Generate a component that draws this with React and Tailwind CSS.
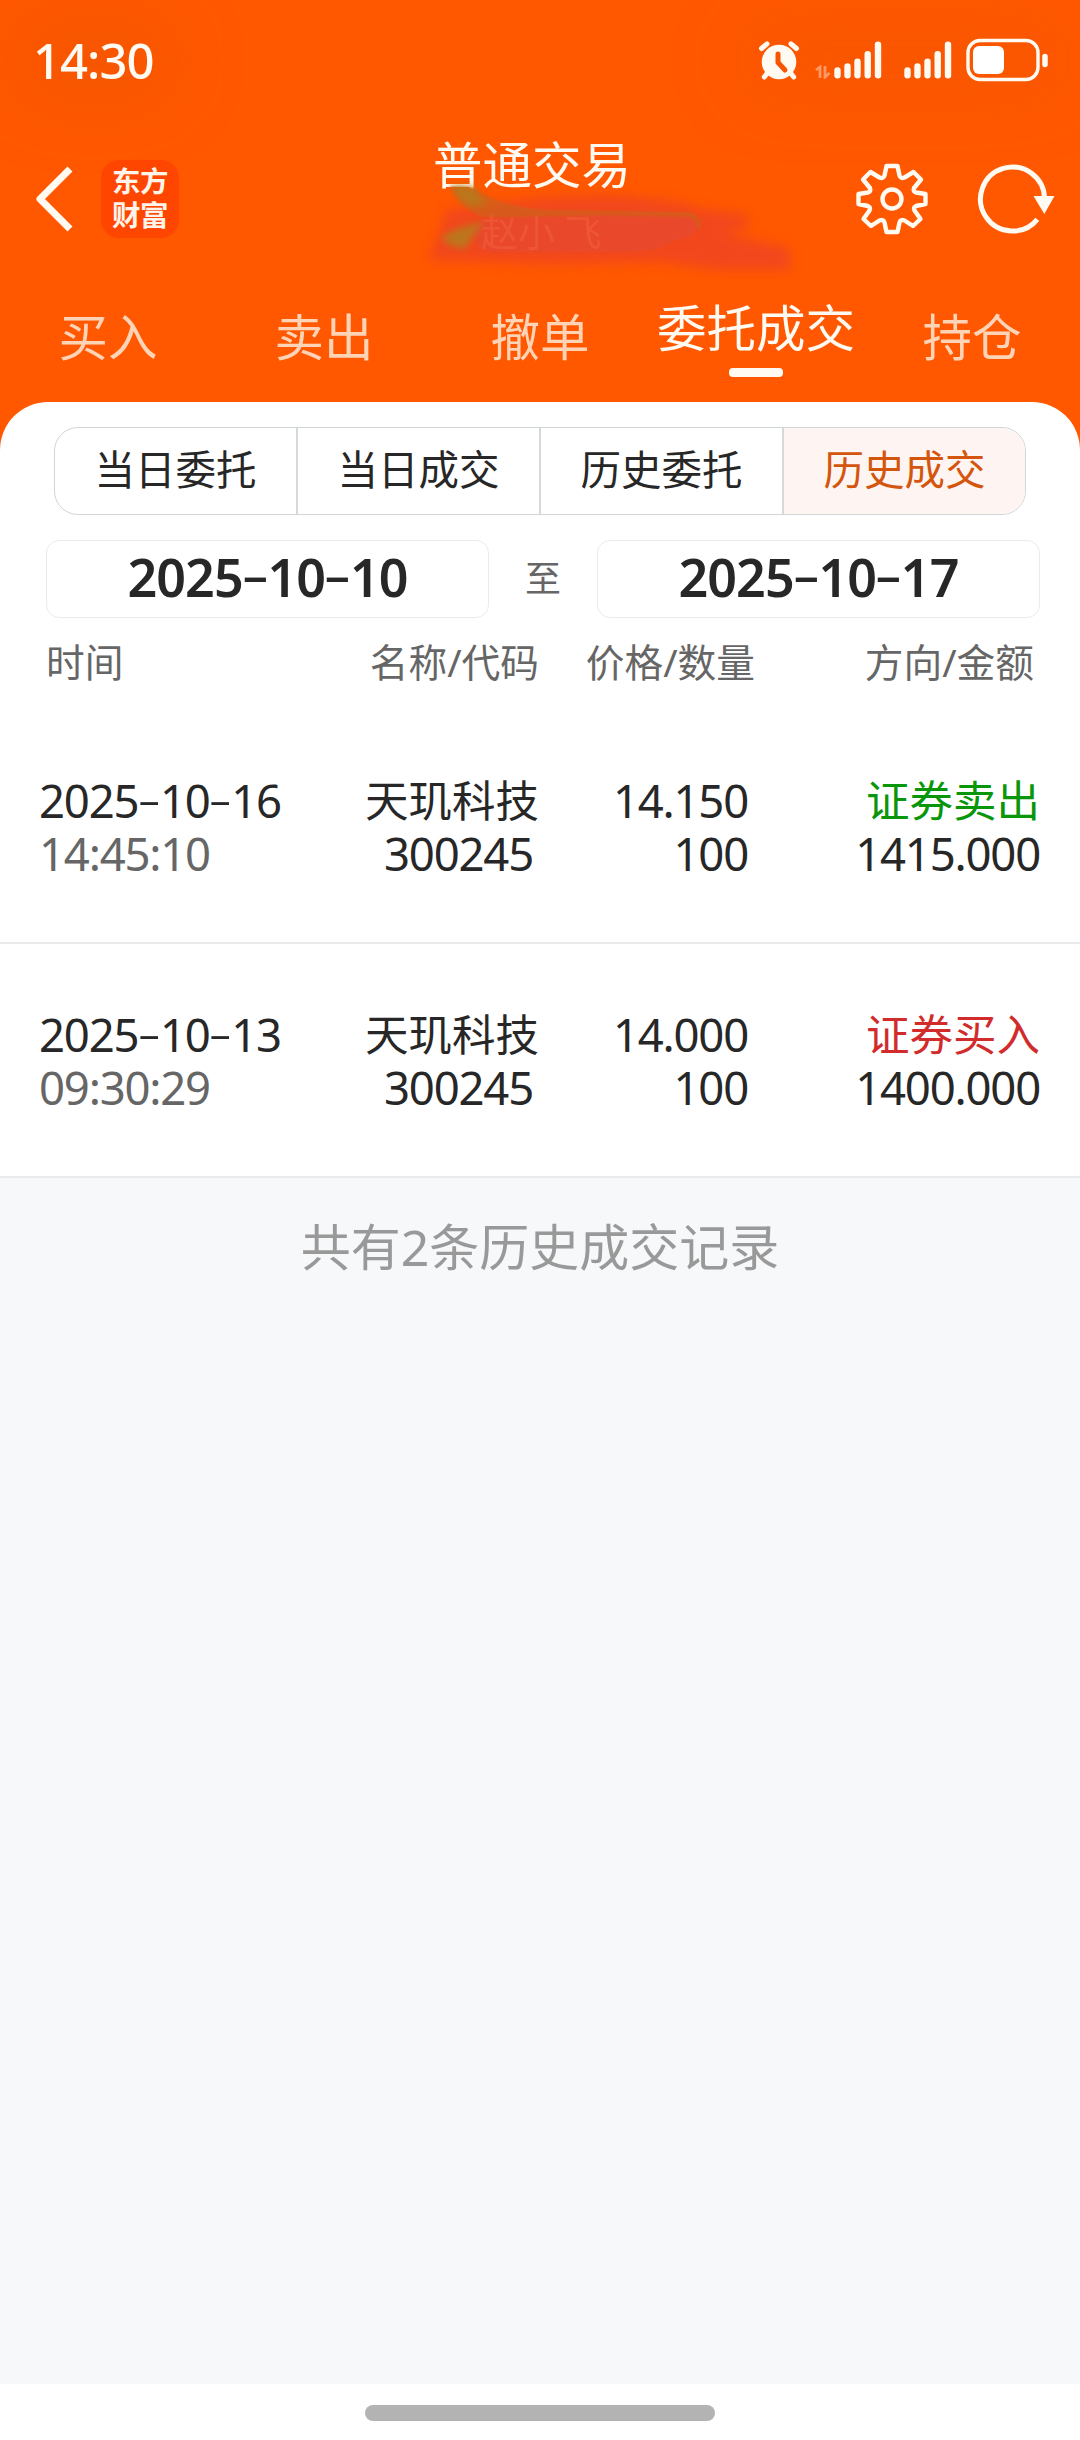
import React from 'react';

const mainTabs = [
  { label: '买入' },
  { label: '卖出' },
  { label: '撤单' },
  { label: '委托成交', active: true },
  { label: '持仓' },
];

const subTabs = ['当日委托', '当日成交', '历史委托', '历史成交'];

const trades = [
  { date: '2025-10-16', time: '14:45:10', name: '天玑科技', code: '300245', price: '14.150', count: '100', side: '证券卖出', amount: '1415.000', color: 'text-[#0a960a]' },
  { date: '2025-10-13', time: '09:30:29', name: '天玑科技', code: '300245', price: '14.000', count: '100', side: '证券买入', amount: '1400.000', color: 'text-[#d12b2b]' },
];

// dates use a wide hyphen between the digit groups
function DateText({ value }) {
  return (
    <span className="whitespace-nowrap">
      {value.split('-').map((part, i) => (
        <React.Fragment key={i}>
          {i > 0 && (
            <span className="inline-block w-[0.475em] text-center tracking-normal">
              <span className="inline-block scale-x-[1.6] scale-y-[0.8] -translate-y-[0.03em]">-</span>
            </span>
          )}
          {part}
        </React.Fragment>
      ))}
    </span>
  );
}

function Signal() {
  return (
    <svg className="w-[48px] h-[38px]" viewBox="0 0 48 38" stroke="#fffaf2" strokeWidth="6.4" strokeLinecap="round">
      <path d="M3.5 29.5V34.3M13.5 25.5V34.3M23.5 20.7V34.3M33.7 13.2V34.3M44 3.7V34.3" />
    </svg>
  );
}

function StatusBar() {
  return (
    <div className="h-[120px] flex items-center justify-between pl-[33px] pr-[32px]">
      <span className="relative text-[49px] leading-[60px] font-medium tracking-[-1px]">
        <span className="absolute -inset-x-4 inset-y-0 rounded-full bg-[#c84600]/25 blur-2xl"></span>
        <span className="relative">14:30</span>
      </span>
      <div className="relative flex items-center h-[44px]">
        <span className="absolute -inset-x-4 inset-y-0 rounded-full bg-[#c84600]/20 blur-2xl"></span>
        <svg className="relative w-[42px] h-[40px]" viewBox="0 0 42 40" fill="none" strokeLinecap="round">
          <circle cx="21" cy="22" r="17.3" fill="#fffaf2" />
          <path d="M3.5 8.5L9 3.8M38.5 8.5L33 3.8M9 33.5L6.3 37M33 33.5L35.7 37" stroke="#fffaf2" strokeWidth="5" />
          <path d="M20 14V22.5L27 30" stroke="#f85500" strokeWidth="5" strokeLinejoin="round" />
        </svg>
        <svg className="relative w-[16px] h-[14px] ml-[15px] mt-[24px]" viewBox="0 0 16 14" fill="none" stroke="#ff9864" strokeWidth="2.8">
          <path d="M1 5L5 2V13M10 1V12L14.5 8" />
        </svg>
        <div className="relative ml-[3px]"><Signal /></div>
        <div className="relative ml-[22px]"><Signal /></div>
        <svg className="relative w-[82px] h-[44px] ml-[14px]" viewBox="0 0 82 44" fill="none">
          <rect x="2" y="2.5" width="70" height="39" rx="12" stroke="#fffaf2" strokeWidth="3.4" />
          <rect x="7" y="8" width="31" height="28" rx="6" fill="#fff" />
          <path d="M79 18.5V26.5" stroke="#fffaf2" strokeWidth="5.5" strokeLinecap="round" />
        </svg>
      </div>
    </div>
  );
}

function Smudge() {
  return (
    <svg className="absolute left-[400px] top-[180px] w-[420px] h-[100px]" viewBox="0 0 420 100" fill="none">
      <defs>
        <filter id="soft" x="-20%" y="-50%" width="140%" height="200%"><feGaussianBlur stdDeviation="6" /></filter>
        <filter id="mid" x="-20%" y="-50%" width="140%" height="200%"><feGaussianBlur stdDeviation="3.5" /></filter>
        <filter id="edge" x="-20%" y="-50%" width="140%" height="200%"><feGaussianBlur stdDeviation="1.2" /></filter>
      </defs>
      <path d="M46 30Q140 14 220 16Q280 20 300 29L345 34L350 46L325 54L390 68L390 90L320 90L260 82L150 84L28 80L40 50Z" fill="#f04420" opacity="0.85" filter="url(#soft)" />
      <path d="M50 6L74 8Q100 27 150 30Q230 31 290 32Q304 38 300 50Q290 38 200 38Q100 40 80 36Q58 26 50 6Z" fill="#d0601e" opacity="0.75" filter="url(#edge)" />
      <path d="M80 39Q180 33 290 37Q304 45 290 57Q270 62 255 69Q240 72 200 72H90Q66 66 80 39Z" fill="#e9492c" filter="url(#edge)" />
      <path d="M52 5L74 7Q78 18 90 24L72 26Q56 20 52 5M42 56Q60 46 84 42Q72 56 66 68Q46 68 42 56Z" fill="#b57c1c" opacity="0.9" filter="url(#mid)" />
    </svg>
  );
}

function TitleBar() {
  return (
    <div className="relative h-[158px] flex items-center justify-between pl-[34px] pr-[25px]">
      <div className="flex items-center">
        <svg className="w-[40px] h-[66px]" viewBox="0 0 40 66" fill="none" stroke="#fffaf2" strokeWidth="7">
          <path d="M36 3L6 33L36 63" strokeLinejoin="round" />
        </svg>
        <div className="w-[78px] h-[78px] ml-[27px] rounded-[18px] bg-[#ff4600] flex flex-col items-center justify-center text-[28.5px] leading-[34px] font-bold tracking-[-0.5px] text-[#fff4ea]">
          <span className="-mt-[2px]">东方</span>
          <span>财富</span>
        </div>
      </div>
      <div className="flex items-center gap-[46px]">
        <svg className="w-[74px] h-[74px]" viewBox="0 0 74 74" fill="none" stroke="#fffaf2" strokeWidth="4.4" strokeLinejoin="round">
          <path d="M31.5 4H42.5L44.5 13.5Q45.5 17 49.5 15.5L58.5 10L66 17.5L59 26Q58 29.5 61 30.5L70.5 32V42L61 44Q58 45 59.5 48.5L65.5 57L58 64L49.5 58.5Q45.5 57 44.5 60.5L42.5 70H31.5L29.5 60.5Q28.5 57 24.5 58.5L16 64L8.5 57L14.5 48.5Q16 45 13 44L3.5 42V32L13 30.5Q16 29.5 15 26L8 17.5L15.5 10L24.5 15.5Q28.5 17 29.5 13.5Z" />
          <circle cx="37" cy="37" r="9.5" />
        </svg>
        <svg className="w-[80px] h-[74px]" viewBox="0 0 80 74" fill="none">
          <path d="M69.5 37A32 32 0 1 0 62.3 57.3" stroke="#fffaf2" strokeWidth="5" />
          <path d="M58.5 34H79.5L69.3 52Z" fill="#fffaf2" />
        </svg>
      </div>
    </div>
  );
}

function MainTabs() {
  return (
    <div className="h-[122px] flex pt-[12px]">
      {mainTabs.map((tab) => (
        <div key={tab.label} className="w-[216px] flex flex-col items-center whitespace-nowrap">
          {tab.active ? (
            <>
              <span className="text-[49.5px] leading-[76px]">{tab.label}</span>
              <span className="w-[54px] h-[9px] rounded-[4px] bg-[#fffaf2] mt-[2px]"></span>
            </>
          ) : (
            <span className="text-[49.5px] leading-[94px] text-[#ffd3b6]">{tab.label}</span>
          )}
        </div>
      ))}
    </div>
  );
}

export default function App() {
  return (
    <div className="w-[1080px] h-[2440px] flex flex-col bg-[#f6f8fa] text-[#272727] overflow-hidden font-['Noto_Sans','Noto_Sans_CJK_SC',sans-serif]">
      <header className="relative shrink-0 h-[470px] bg-[#ff5800] text-[#fffaf2]">
        <StatusBar />
        <TitleBar />
        <MainTabs />
        <div className="absolute left-0 right-0 top-[127px] text-center text-[49.5px] leading-[76px] pr-[16px]">普通交易</div>
        <Smudge />
        <span className="absolute left-[481px] top-[210px] text-[37px] leading-[46px] text-[#ff7a58]/25 whitespace-pre">赵小 飞</span>
      </header>

      <main className="relative shrink-0 -mt-[68px] rounded-t-[48px] bg-white pt-[25px]">
        <div className="ml-[54px] w-[972px] h-[88px] flex rounded-[24px] border border-[#d0d5d8] overflow-hidden">
          {subTabs.map((tab, i) => (
            <div
              key={tab}
              className={`flex-1 flex items-center justify-center pb-[2px] text-[40.5px] leading-none ${i > 0 ? 'border-l-2 border-[#d5d9db]' : ''} ${i === 3 ? 'bg-[#fef5f2] text-[#d4560e]' : ''}`}
            >
              {tab}
            </div>
          ))}
        </div>

        <div className="mt-[25px] pl-[46px] pr-[40px] flex items-center justify-between">
          <div className="w-[443px] h-[78px] pb-[4px] rounded-[13px] border border-[#ebebeb] flex items-center justify-center text-[52px] leading-none tracking-[-0.9px] font-semibold">
            <DateText value="2025-10-10" />
          </div>
          <span className="text-[36px] text-[#666] leading-none">至</span>
          <div className="w-[443px] h-[78px] pb-[4px] rounded-[13px] border border-[#ebebeb] flex items-center justify-center text-[52px] leading-none tracking-[-0.9px] font-semibold">
            <DateText value="2025-10-17" />
          </div>
        </div>

        <div className="h-[92px] pb-[4px] flex items-center text-[38.7px] leading-none text-[#666] px-[46px]">
          <span className="w-[200px]">时间</span>
          <span className="w-[293px] text-right">名称/代码</span>
          <span className="w-[216px] text-right">价格/数量</span>
          <span className="flex-1 text-right">方向/金额</span>
        </div>

        {trades.map((t) => (
          <div key={t.date} className="h-[234px] flex pt-[64px] pl-[39px] pr-[40px] text-[45.5px] leading-[53px] tracking-[-1.2px] border-b-2 border-[#e9ebed]">
            <div className="w-[260px]">
              <div><DateText value={t.date} /></div>
              <div className="text-[#666]">{t.time}</div>
            </div>
            <div className="w-[240px] text-right">
              <div className="text-[43.5px] tracking-normal">{t.name}</div>
              <div className="pr-[6px]">{t.code}</div>
            </div>
            <div className="w-[209px] text-right">
              <div>{t.price}</div>
              <div>{t.count}</div>
            </div>
            <div className="flex-1 text-right">
              <div className={`text-[43.5px] tracking-normal ${t.color}`}>{t.side}</div>
              <div>{t.amount}</div>
            </div>
          </div>
        ))}
      </main>

      <p className="flex-1 pt-[31px] text-center text-[50px] leading-[76px] text-[#999]">共有2条历史成交记录</p>

      <footer className="shrink-0 h-[56px] pt-[2px] bg-white flex items-center justify-center">
        <div className="w-[350px] h-[16px] rounded-full bg-[#b3b3b3]"></div>
      </footer>
    </div>
  );
}
